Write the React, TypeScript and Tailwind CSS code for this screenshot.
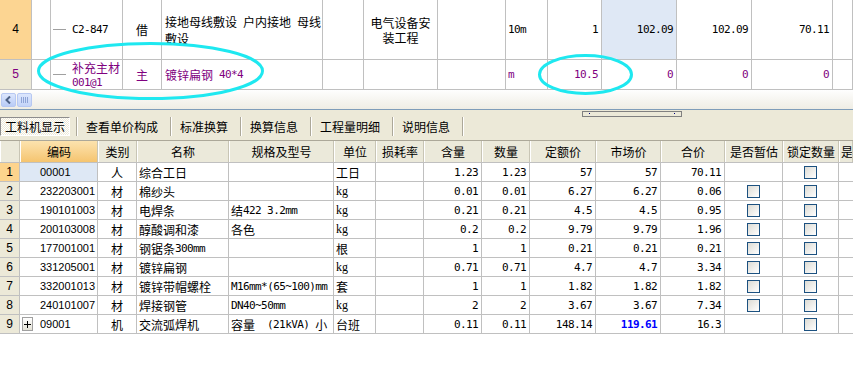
import React from 'react';

const MONO = "font-['DejaVu_Sans_Mono',monospace] text-[11px] tracking-[-0.6px]";
const SANS = "font-['Liberation_Sans',sans-serif] text-[11px]";

// split a string into latin / CJK runs so latin gets the half-width mono face
const Mix: React.FC<{ s: string }> = ({ s }) => (
  <>
    {s.split(/([\x20-\x7e\u00a0]+)/).map((p, i) =>
      p === '' ? null : /^[\x20-\x7e\u00a0]+$/.test(p) ? (
        <span key={i} className={`${MONO} whitespace-pre`}>{p}</span>
      ) : (
        <span key={i}>{p}</span>
      )
    )}
  </>
);

const TOPW = ['w-[32px]', 'w-[19px]', 'w-[72px]', 'w-[39px]', 'w-[161px]', 'w-[41px]', 'w-[74px]', 'w-[68px]', 'w-[42px]', 'w-[54px]', 'w-[75px]', 'w-[75px]', 'w-[81px]', 'w-[20px]'];
const BOTW = ['w-[20px]', 'w-[78px]', 'w-[39px]', 'w-[92px]', 'w-[105px]', 'w-[42px]', 'w-[48px]', 'w-[58px]', 'w-[48px]', 'w-[66px]', 'w-[65px]', 'w-[64px]', 'w-[58px]', 'w-[56px]', 'w-[14px]'];

const Cell: React.FC<{ w: string; className?: string; children?: React.ReactNode }> = ({ w, className = '', children }) => (
  <div className={`${w} shrink-0 h-full border-r border-[#c0c0c0] flex items-center overflow-hidden ${className}`}>{children}</div>
);

const TreeLine = () => <div className="w-[13px] h-px bg-[#a0a0a0] ml-[2px] mr-[6px] shrink-0" />;

const TopGrid = () => (
  <div className="h-[90px]">
    {/* row 4 */}
    <div className="flex h-[60px] border-b border-[#c0c0c0]">
      <Cell w={TOPW[0]} className={`justify-center bg-[#fcd592] ${SANS} text-[12px]`}>4</Cell>
      <Cell w={TOPW[1]} />
      <Cell w={TOPW[2]}>
        <TreeLine />
        <Mix s="C2-847" />
      </Cell>
      <Cell w={TOPW[3]} className="justify-center">借</Cell>
      <Cell w={TOPW[4]} className="pl-[3px]">
        <div className="whitespace-nowrap leading-[15px]">
          <div><Mix s="接地母线敷设 户内接地 母线" /></div>
          <div>敷设</div>
        </div>
      </Cell>
      <Cell w={TOPW[5]} />
      <Cell w={TOPW[6]} className="justify-center text-center">
        <div className="leading-[15px]">
          <div>电气设备安</div>
          <div>装工程</div>
        </div>
      </Cell>
      <Cell w={TOPW[7]} />
      <Cell w={TOPW[8]} className="pl-[2px]"><Mix s="10m" /></Cell>
      <Cell w={TOPW[9]} className="justify-end pr-[3px]"><Mix s="1" /></Cell>
      <Cell w={TOPW[10]} className="justify-end pr-[3px] bg-[#dfe8f5]"><Mix s="102.09" /></Cell>
      <Cell w={TOPW[11]} className="justify-end pr-[3px]"><Mix s="102.09" /></Cell>
      <Cell w={TOPW[12]} className="justify-end pr-[3px]"><Mix s="70.11" /></Cell>
      <Cell w={TOPW[13]} />
    </div>
    {/* row 5 */}
    <div className="flex h-[30px] border-b border-[#c0c0c0] text-[#800080]">
      <Cell w={TOPW[0]} className={`justify-center bg-[#ece9d8] ${SANS} text-[12px]`}>5</Cell>
      <Cell w={TOPW[1]} />
      <Cell w={TOPW[2]}>
        <TreeLine />
        <div className="leading-[13px]">
          <div>补充主材</div>
          <div><Mix s="001@1" /></div>
        </div>
      </Cell>
      <Cell w={TOPW[3]} className="justify-center">主</Cell>
      <Cell w={TOPW[4]} className="pl-[3px]"><Mix s="镀锌扁钢 40*4" /></Cell>
      <Cell w={TOPW[5]} />
      <Cell w={TOPW[6]} />
      <Cell w={TOPW[7]} />
      <Cell w={TOPW[8]} className="pl-[2px]"><Mix s="m" /></Cell>
      <Cell w={TOPW[9]} className="justify-end pr-[3px]"><Mix s="10.5" /></Cell>
      <Cell w={TOPW[10]} className="justify-end pr-[3px]"><Mix s="0" /></Cell>
      <Cell w={TOPW[11]} className="justify-end pr-[3px]"><Mix s="0" /></Cell>
      <Cell w={TOPW[12]} className="justify-end pr-[3px]"><Mix s="0" /></Cell>
      <Cell w={TOPW[13]} />
    </div>
  </div>
);

const ScrollBand = () => (
  <div className="h-[20px] bg-linear-to-b from-[#fefefe] to-[#efede4] border-b border-[#7f9db9] flex items-start pt-[3px] pl-[1px] gap-[1px]">
    <div className="w-[15px] h-[14px] rounded-[2px] border border-[#b7c8f2] bg-linear-to-b from-[#dce6fd] to-[#b9ccf6] flex items-center justify-center">
      <svg width="7" height="8" viewBox="0 0 7 8">
        <path d="M5 0.5 L1.5 4 L5 7.5" fill="none" stroke="#4d6185" strokeWidth="2" />
      </svg>
    </div>
    <div className="w-[15px] h-[14px] rounded-[2px] border border-[#b7c8f2] bg-linear-to-b from-[#dce6fd] to-[#c4d4f8] flex items-center justify-center gap-[1px]">
      <div className="w-px h-[6px] bg-[#8ea4d6]" />
      <div className="w-px h-[6px] bg-[#8ea4d6]" />
      <div className="w-px h-[6px] bg-[#8ea4d6]" />
      <div className="w-px h-[6px] bg-[#8ea4d6]" />
    </div>
  </div>
);

const Sep = () => (
  <div className="flex h-[19px] shrink-0">
    <div className="w-px h-full bg-[#aca899]" />
    <div className="w-px h-full bg-white" />
  </div>
);

const TabBar = () => {
  const tabs = ['查看单价构成', '标准换算', '换算信息', '工程量明细', '说明信息'];
  return (
    <div className="relative h-[31px] bg-[#ece9d8] border-b border-[#aca899] flex items-center pt-[2px]">
      <div className="w-[70px] h-[19px] shrink-0 border border-t-[#8d8d8d] border-l-[#8d8d8d] border-r-white border-b-white bg-[repeating-conic-gradient(#ffffff_0_25%,#ece9d8_0_50%)] bg-size-[2px_2px] flex items-center justify-center">
        工料机显示
      </div>
      <div className="w-[6px] shrink-0" />
      {tabs.map((t) => (
        <React.Fragment key={t}>
          <Sep />
          <div className="pl-[8px] pr-[12px] shrink-0">{t}</div>
        </React.Fragment>
      ))}
      <Sep />
      {/* splitter grip */}
      <div className="absolute left-[582px] top-[1px] w-[100px] h-[6px] border border-[#808080] bg-[#ece9d8]">
        <div className="absolute left-[6px] top-[1px] w-px h-px bg-[#000080]" />
        <div className="absolute left-[91px] top-[1px] w-px h-px bg-[#000080]" />
      </div>
    </div>
  );
};

const Check = () => (
  <div className="w-[13px] h-[13px] border border-[#1c5180] bg-linear-to-br from-[#dcdbd4] to-white" />
);

type Row = {
  n: number;
  code: string;
  cat: string;
  name: string;
  spec: string;
  unit: string;
  qty: string;
  num: string;
  quota: string;
  market: string;
  total: string;
  est: boolean;
};

const rows: Row[] = [
  { n: 1, code: '00001', cat: '人', name: '综合工日', spec: '', unit: '工日', qty: '1.23', num: '1.23', quota: '57', market: '57', total: '70.11', est: false },
  { n: 2, code: '232203001', cat: '材', name: '棉纱头', spec: '', unit: 'kg', qty: '0.01', num: '0.01', quota: '6.27', market: '6.27', total: '0.06', est: true },
  { n: 3, code: '190101003', cat: '材', name: '电焊条', spec: '结422 3.2mm', unit: 'kg', qty: '0.21', num: '0.21', quota: '4.5', market: '4.5', total: '0.95', est: true },
  { n: 4, code: '200103008', cat: '材', name: '醇酸调和漆', spec: '各色', unit: 'kg', qty: '0.2', num: '0.2', quota: '9.79', market: '9.79', total: '1.96', est: true },
  { n: 5, code: '177001001', cat: '材', name: '钢锯条300mm', spec: '', unit: '根', qty: '1', num: '1', quota: '0.21', market: '0.21', total: '0.21', est: true },
  { n: 6, code: '331205001', cat: '材', name: '镀锌扁钢', spec: '', unit: 'kg', qty: '0.71', num: '0.71', quota: '4.7', market: '4.7', total: '3.34', est: true },
  { n: 7, code: '332001013', cat: '材', name: '镀锌带帽螺栓', spec: 'M16mm*(65~100)mm', unit: '套', qty: '1', num: '1', quota: '1.82', market: '1.82', total: '1.82', est: true },
  { n: 8, code: '240101007', cat: '材', name: '焊接钢管', spec: 'DN40~50mm', unit: 'kg', qty: '2', num: '2', quota: '3.67', market: '3.67', total: '7.34', est: true },
  { n: 9, code: '09001', cat: '机', name: '交流弧焊机', spec: '容量\u00a0\u00a0(21kVA) 小', unit: '台班', qty: '0.11', num: '0.11', quota: '148.14', market: '119.61', total: '16.3', est: false },
];

const headers = ['', '编码', '类别', '名称', '规格及型号', '单位', '损耗率', '含量', '数量', '定额价', '市场价', '合价', '是否暂估', '锁定数量', '是'];

const BottomGrid = () => (
  <div>
    <div className="flex h-[22px] border-b border-[#c0c0c0] bg-[#ebe9da]">
      {headers.map((h, i) => (
        <div
          key={i}
          className={`${BOTW[i]} shrink-0 h-full border-r border-[#c8c5b5] border-l border-l-white flex items-center overflow-hidden whitespace-nowrap ${
            i === 14 ? 'pl-[1px]' : 'justify-center'
          } ${i === 1 ? 'bg-linear-to-b from-[#fce3ae] to-[#f5c46f]' : ''}`}
        >
          {h}
        </div>
      ))}
    </div>
    {rows.map((r) => (
      <div key={r.n} className="flex h-[19px] border-b border-[#c0c0c0]">
        <Cell w={BOTW[0]} className={`justify-center ${SANS} text-[12px] ${r.n === 1 ? 'bg-[#fdd48d]' : 'bg-[#ece9d8]'}`}>{r.n}</Cell>
        <Cell w={BOTW[1]} className={`${SANS} ${r.n === 1 ? 'bg-[#dee8f5]' : ''}`}>
          {r.n === 9 ? (
            <div className="ml-[2px] mr-[7px] w-[11px] h-[14px] border border-[#a0a0a0] bg-linear-to-b from-white to-[#e4e2d6] flex items-center justify-center">
              <svg width="7" height="7" viewBox="0 0 7 7">
                <path d="M0 3.5 H7 M3.5 0 V7" stroke="#000" strokeWidth="1" />
              </svg>
            </div>
          ) : (
            <div className="w-[20px] shrink-0" />
          )}
          {r.code}
        </Cell>
        <Cell w={BOTW[2]} className="justify-center">{r.cat}</Cell>
        <Cell w={BOTW[3]} className="pl-[2px] whitespace-nowrap"><Mix s={r.name} /></Cell>
        <Cell w={BOTW[4]} className="pl-[2px] whitespace-nowrap"><Mix s={r.spec} /></Cell>
        <Cell w={BOTW[5]} className="pl-[2px] whitespace-nowrap">
          {r.unit === 'kg' ? <span className="font-['Liberation_Serif',serif] text-[12px]">kg</span> : r.unit}
        </Cell>
        <Cell w={BOTW[6]} />
        <Cell w={BOTW[7]} className="justify-end pr-[3px]"><Mix s={r.qty} /></Cell>
        <Cell w={BOTW[8]} className="justify-end pr-[3px]"><Mix s={r.num} /></Cell>
        <Cell w={BOTW[9]} className="justify-end pr-[3px]"><Mix s={r.quota} /></Cell>
        <Cell w={BOTW[10]} className="justify-end pr-[3px]">
          {r.n === 9 ? (
            <span className={`${MONO} font-bold text-[#0000ff]`}>{r.market}</span>
          ) : (
            <Mix s={r.market} />
          )}
        </Cell>
        <Cell w={BOTW[11]} className="justify-end pr-[3px]"><Mix s={r.total} /></Cell>
        <Cell w={BOTW[12]} className="justify-center">{r.est && <Check />}</Cell>
        <Cell w={BOTW[13]} className="justify-center"><Check /></Cell>
        <Cell w={BOTW[14]} className="border-r-0" />
      </div>
    ))}
  </div>
);

// cyan hand-drawn marks over the screenshot
const Annotations = () => (
  <svg className="absolute left-0 top-0 pointer-events-none" width="853" height="377">
    <ellipse cx="150.5" cy="71" rx="112" ry="27.5" fill="none" stroke="#1ee8f0" strokeWidth="3" />
    <ellipse cx="585.5" cy="74.5" rx="46" ry="19" fill="none" stroke="#1ee8f0" strokeWidth="3" />
  </svg>
);

export default function App() {
  return (
    <div className="relative w-[853px] h-[377px] overflow-hidden bg-white text-black font-['Noto_Sans_CJK_SC',sans-serif] text-[12px] leading-[13px]">
      <TopGrid />
      <ScrollBand />
      <TabBar />
      <BottomGrid />
      <Annotations />
    </div>
  );
}
